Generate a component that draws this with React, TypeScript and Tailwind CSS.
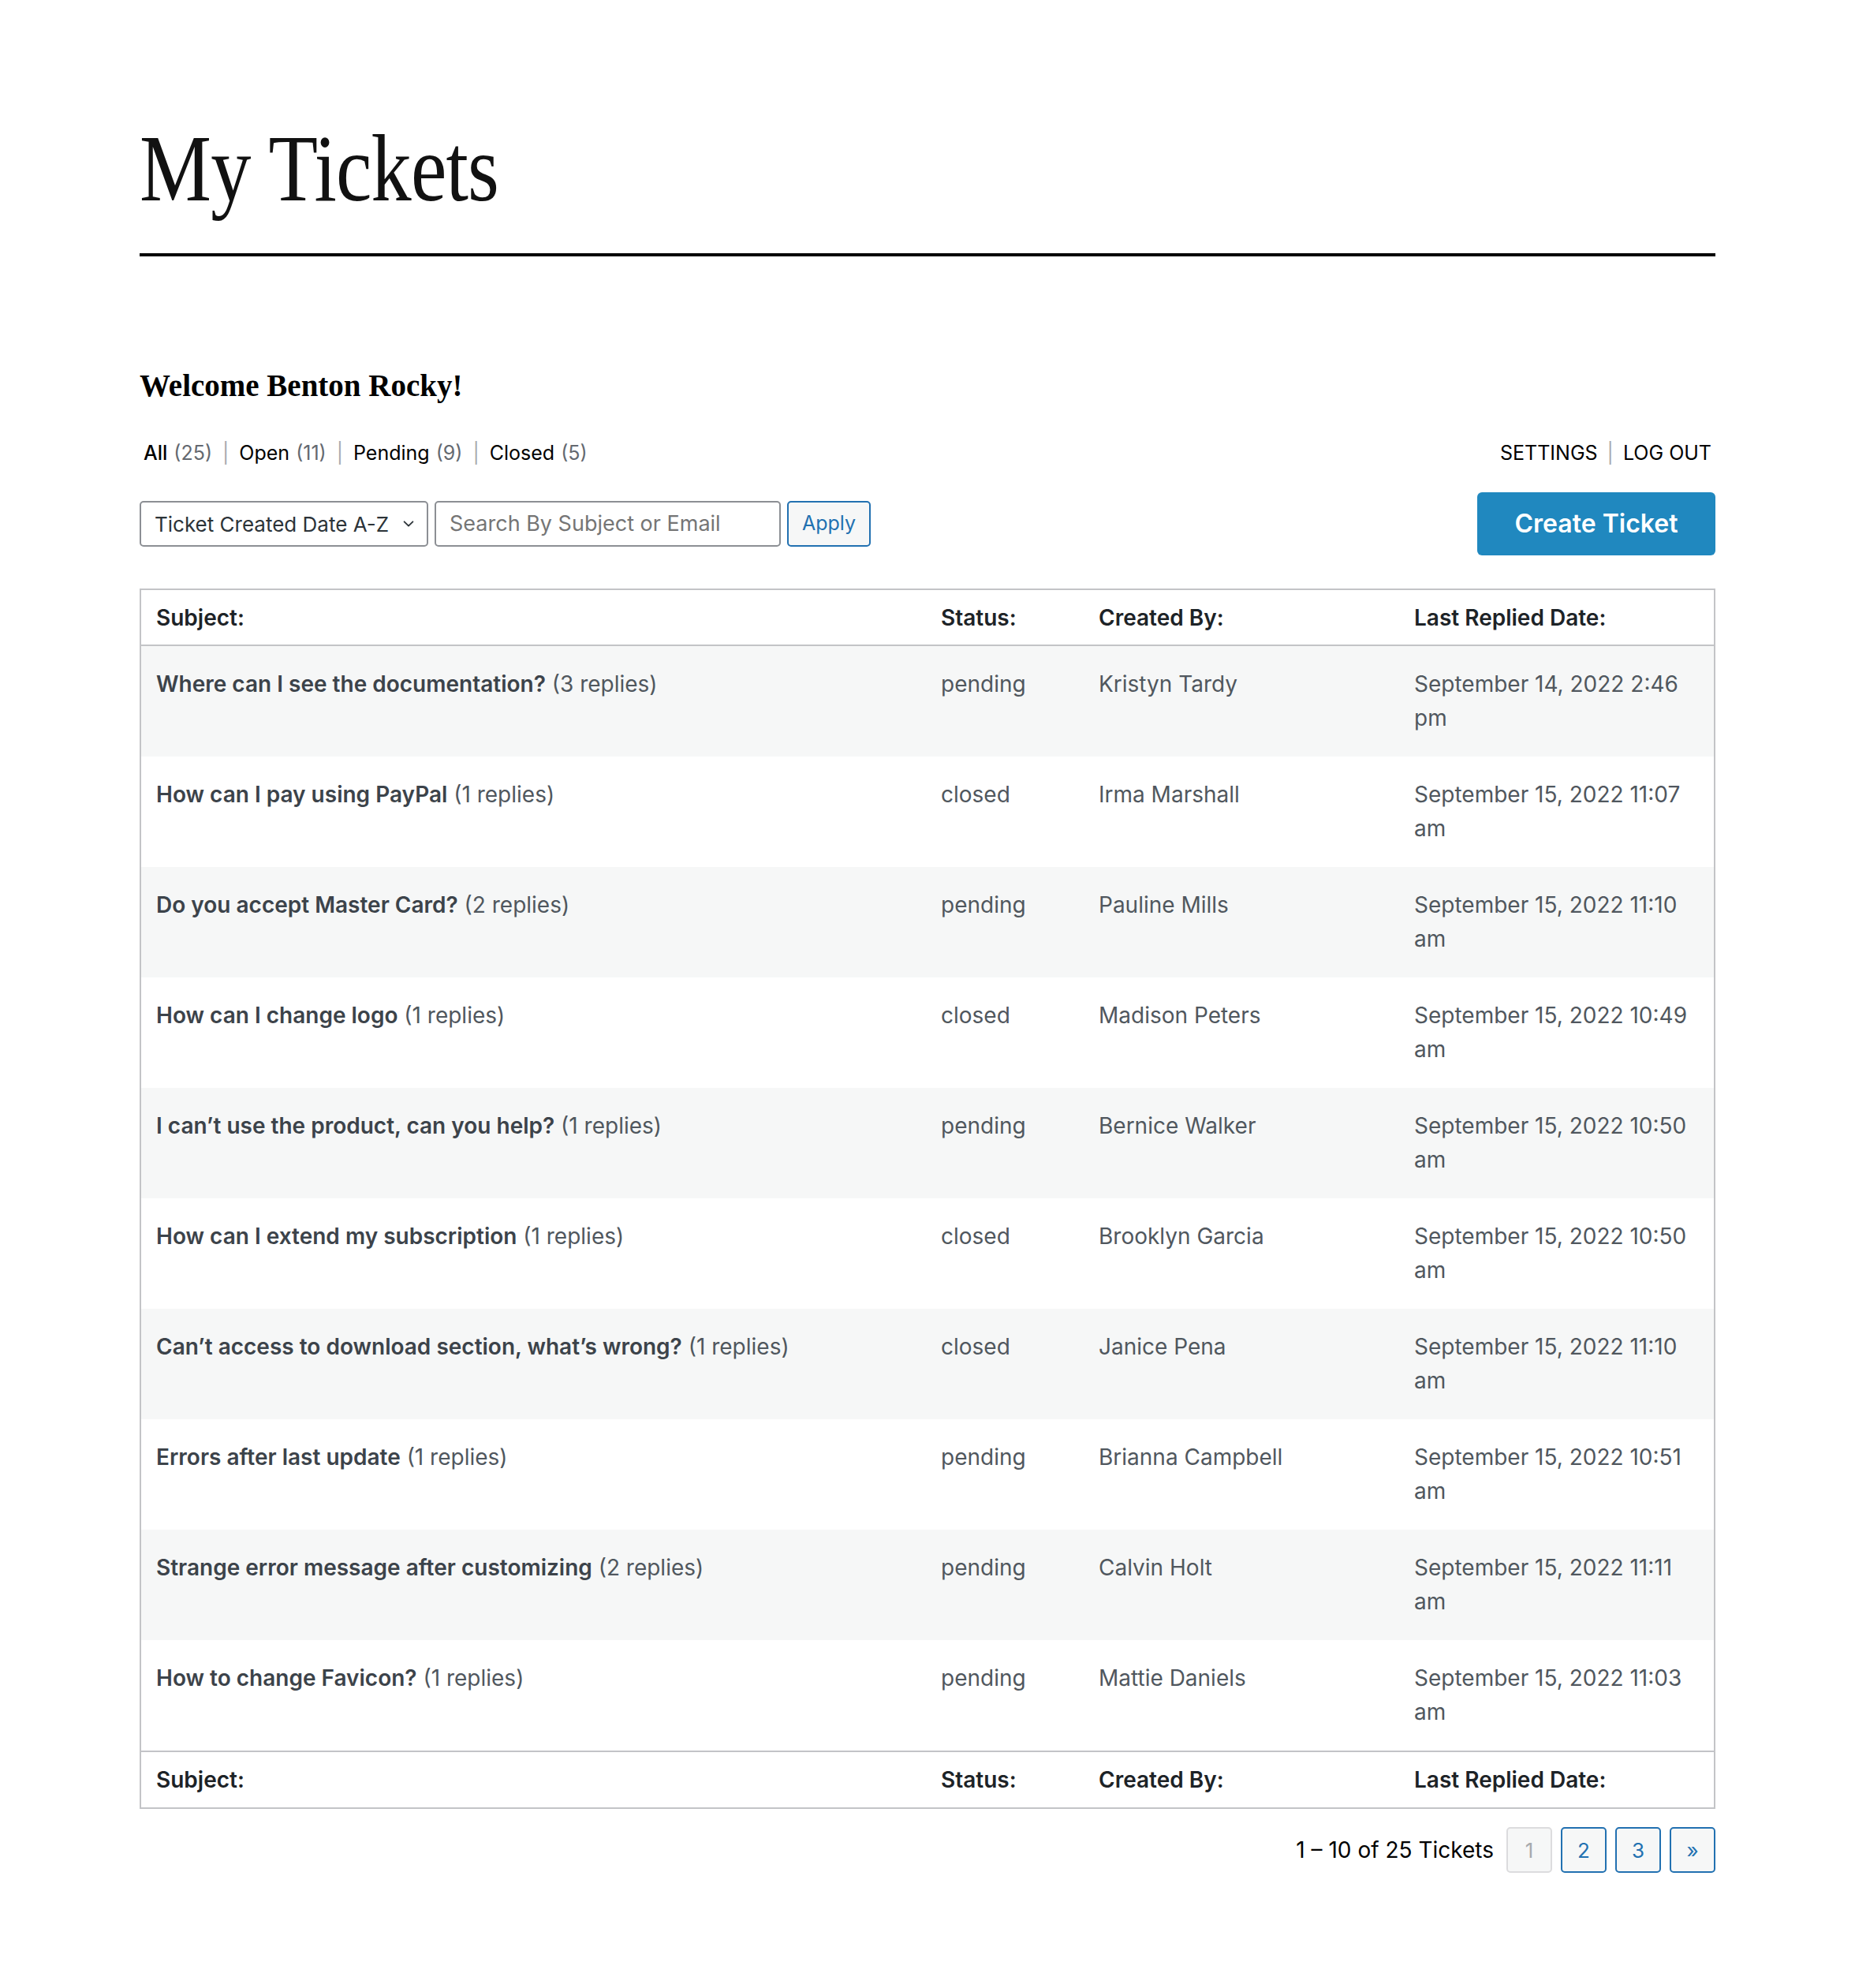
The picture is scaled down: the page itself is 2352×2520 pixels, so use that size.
import React from "react";

const rows = [
  { s: "Where can I see the documentation?", r: 3, st: "pending", by: "Kristyn Tardy", d: "September 14, 2022 2:46", ap: "pm" },
  { s: "How can I pay using PayPal", r: 1, st: "closed", by: "Irma Marshall", d: "September 15, 2022 11:07", ap: "am" },
  { s: "Do you accept Master Card?", r: 2, st: "pending", by: "Pauline Mills", d: "September 15, 2022 11:10", ap: "am" },
  { s: "How can I change logo", r: 1, st: "closed", by: "Madison Peters", d: "September 15, 2022 10:49", ap: "am" },
  { s: "I can’t use the product, can you help?", r: 1, st: "pending", by: "Bernice Walker", d: "September 15, 2022 10:50", ap: "am" },
  { s: "How can I extend my subscription", r: 1, st: "closed", by: "Brooklyn Garcia", d: "September 15, 2022 10:50", ap: "am" },
  { s: "Can’t access to download section, what’s wrong?", r: 1, st: "closed", by: "Janice Pena", d: "September 15, 2022 11:10", ap: "am" },
  { s: "Errors after last update", r: 1, st: "pending", by: "Brianna Campbell", d: "September 15, 2022 10:51", ap: "am" },
  { s: "Strange error message after customizing", r: 2, st: "pending", by: "Calvin Holt", d: "September 15, 2022 11:11", ap: "am" },
  { s: "How to change Favicon?", r: 1, st: "pending", by: "Mattie Daniels", d: "September 15, 2022 11:03", ap: "am" },
];

const sans = "font-['Inter','Liberation_Sans',sans-serif]";

function HeaderRow({ border, h }: { border: string; h: string }) {
  return (
    <div className={`grid grid-cols-[995px_200px_400px_1fr] ${h} items-center bg-white text-[28px] font-semibold text-[#1d2327] ${border}`}>
      <div className="pl-[19px]">Subject:</div>
      <div className="pl-[19px]">Status:</div>
      <div className="pl-[19px]">Created By:</div>
      <div className="pl-[19px]">Last Replied Date:</div>
    </div>
  );
}

export default function App() {
  return (
    <div className={`min-h-[2520px] bg-white ${sans}`}>
      <div className="mx-auto w-[1998px] pt-[154px]">
        <h1 className="h-[120px] text-[120px] leading-[120px] font-normal text-[#111] font-['Liberation_Serif','Times_New_Roman',serif] whitespace-nowrap">
          <span className="inline-block origin-left scale-x-[0.853] tracking-[-1px]">My Tickets</span>
        </h1>
        <div className="mt-[47px] h-[4px] bg-black" />

        <h2 className="mt-[141px] text-[39px] leading-[46px] font-bold text-black font-['Liberation_Serif','Times_New_Roman',serif]">
          Welcome Benton Rocky!
        </h2>

        <div className="mt-[44px] flex h-[36px] items-center justify-between text-[25px] leading-[36px]">
          <div className="flex items-center pl-[5px] text-black">
            <span className="font-medium">All</span>
            <span className="ml-[8px] text-[#646970]">(25)</span>
            <span className="mx-[13px] text-[#a7aaad]">|</span>
            <span>Open</span>
            <span className="ml-[8px] text-[#646970]">(11)</span>
            <span className="mx-[13px] text-[#a7aaad]">|</span>
            <span>Pending</span>
            <span className="ml-[8px] text-[#646970]">(9)</span>
            <span className="mx-[13px] text-[#a7aaad]">|</span>
            <span>Closed</span>
            <span className="ml-[8px] text-[#646970]">(5)</span>
          </div>
          <div className="flex items-center pr-[5px] text-black">
            <span>SETTINGS</span>
            <span className="mx-[12px] text-[#a7aaad]">|</span>
            <span>LOG OUT</span>
          </div>
        </div>

        <div className="mt-[32px] flex h-[80px] items-center justify-between">
          <div className="flex items-center gap-[8px]">
            <div className="flex h-[58px] w-[366px] items-center justify-between rounded-[5px] border-2 border-[#8c8f94] bg-white pl-[17px] pr-[14px] text-[26px] text-[#2c3338]">
              <span>Ticket Created Date A-Z</span>
              <svg width="18" height="18" viewBox="0 0 20 20" fill="none" stroke="#2c3338" strokeWidth="2" strokeLinecap="round" strokeLinejoin="round">
                <path d="M4 7l6 6 6-6" />
              </svg>
            </div>
            <div className="flex h-[58px] w-[439px] items-center rounded-[5px] border-2 border-[#8c8f94] bg-white pl-[17px] text-[27px] text-[#757575]">
              Search By Subject or Email
            </div>
            <div className="flex h-[58px] w-[106px] items-center justify-center rounded-[5px] border-2 border-[#2271b1] bg-[#f6f7f7] text-[25px] text-[#2271b1]">
              Apply
            </div>
          </div>
          <div className="flex h-[80px] w-[302px] items-center justify-center rounded-[6px] bg-[#2088bf] text-[32px] font-semibold text-white">
            Create Ticket
          </div>
        </div>

        <div className="mt-[42px] border-2 border-[#c3c4c7]">
          <HeaderRow h="h-[71px]" border="border-b-2 border-[#c3c4c7]" />
          {rows.map((r, i) => (
            <div
              key={i}
              className={`grid h-[140px] grid-cols-[995px_200px_400px_1fr] pt-[27px] text-[28px] leading-[43px] text-[#50575e] ${i % 2 === 0 ? "bg-[#f6f7f7]" : "bg-white"}`}
            >
              <div className="pl-[19px]">
                <span className="font-semibold text-[#3c434a]">{r.s}</span>{" "}
                <span>({r.r} replies)</span>
              </div>
              <div className="pl-[19px]">{r.st}</div>
              <div className="pl-[19px]">{r.by}</div>
              <div className="pl-[19px]">
                <div>{r.d}</div>
                <div>{r.ap}</div>
              </div>
            </div>
          ))}
          <HeaderRow h="h-[72px]" border="border-t-2 border-[#c3c4c7]" />
        </div>

        <div className="mt-[23px] flex items-center justify-end text-[28px]">
          <span className="mr-[16px] text-black">1 – 10 of 25 Tickets</span>
          <div className="flex gap-[11px] text-[26px]">
            <div className="flex h-[58px] w-[58px] items-center justify-center rounded-[5px] border-2 border-[#dcdcde] bg-[#f6f7f7] text-[#a7aaad]">1</div>
            <div className="flex h-[58px] w-[58px] items-center justify-center rounded-[5px] border-2 border-[#2271b1] bg-[#f6f7f7] text-[#2271b1]">2</div>
            <div className="flex h-[58px] w-[58px] items-center justify-center rounded-[5px] border-2 border-[#2271b1] bg-[#f6f7f7] text-[#2271b1]">3</div>
            <div className="flex h-[58px] w-[58px] items-center justify-center rounded-[5px] border-2 border-[#2271b1] bg-[#f6f7f7] text-[#2271b1]">»</div>
          </div>
        </div>
      </div>
    </div>
  );
}
